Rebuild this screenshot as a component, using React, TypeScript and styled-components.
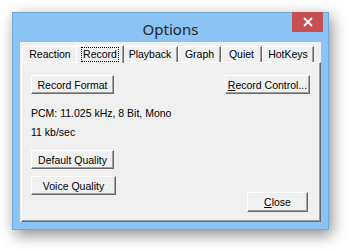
import styled, { createGlobalStyle } from "styled-components";

const GlobalStyle = createGlobalStyle`
  html, body {
    margin: 0;
    padding: 0;
    background: #ffffff;
  }
  body {
    width: 350px;
    height: 251px;
    overflow: hidden;
  }
`;

const tabs = [
  { label: "Reaction", width: 56 },
  { label: "Record", width: 44, active: true },
  { label: "Playback", width: 56 },
  { label: "Graph", width: 43 },
  { label: "Quiet", width: 41 },
  { label: "HotKeys", width: 52 },
];

const App: React.FC = () => {
  return (
    <>
      <GlobalStyle />
      <Page>
        <Window>
          <TitleBar>
            <Title>Options</Title>
            <CloseBox aria-label="Close">
              <svg width="10" height="10" viewBox="0 0 10 10">
                <path d="M1 1 L9 9 M9 1 L1 9" stroke="#fff" strokeWidth="1.8" />
              </svg>
            </CloseBox>
          </TitleBar>
          <Client>
            <TabStrip>
              {tabs.map((tab) => (
                <Tab key={tab.label} $active={tab.active} $width={tab.width}>
                  <TabLabel $active={tab.active}>{tab.label}</TabLabel>
                </Tab>
              ))}
            </TabStrip>
            <Panel>
              <TopRow>
                <Button $width={83}>Record Format</Button>
                <Button $width={85}>
                  <u>R</u>ecord Control...
                </Button>
              </TopRow>
              <InfoLine $top={11}>PCM: 11.025 kHz, 8 Bit, Mono</InfoLine>
              <InfoLine $top={2}>11 kb/sec</InfoLine>
              <BottomRow>
                <QualityColumn>
                  <Button $width={83}>Default Quality</Button>
                  <Button $width={85}>Voice Quality</Button>
                </QualityColumn>
                <CloseButton $width={61}>
                  <u>C</u>lose
                </CloseButton>
              </BottomRow>
            </Panel>
          </Client>
        </Window>
      </Page>
    </>
  );
};

const Page = styled.div`
  padding: 12px 0 0 12px;
`;

const Window = styled.div`
  width: 317px;
  height: 218px;
  box-sizing: border-box;
  background: #8ac3f4;
  border: 1px solid #6fa9de;
  box-shadow: 3px 5px 14px rgba(0, 0, 0, 0.45);
  display: flex;
  flex-direction: column;
`;

const TitleBar = styled.div`
  height: 29px;
  position: relative;
  display: flex;
  align-items: center;
  justify-content: center;
`;

const Title = styled.span`
  font-family: "Noto Sans", "Open Sans", sans-serif;
  font-size: 15px;
  color: #262626;
  margin-top: 2px;
`;

const CloseBox = styled.div`
  position: absolute;
  top: -1px;
  right: 5px;
  width: 31px;
  height: 20px;
  background: #c75050;
  display: flex;
  align-items: center;
  justify-content: center;
`;

const Client = styled.div`
  margin: 0 7px 7px 7px;
  flex: 1;
  background: #f0f0f0;
  display: flex;
  flex-direction: column;
  padding: 3px 0 0 1px;
  font-family: "Liberation Sans", Arial, sans-serif;
  font-size: 10.5px;
  color: #000;
`;

const TabStrip = styled.div`
  display: flex;
  align-items: flex-end;
  height: 17px;
  padding-left: 1px;
  position: relative;
  z-index: 1;
`;

const Tab = styled.div<{ $active?: boolean; $width: number }>`
  box-sizing: border-box;
  flex: none;
  width: ${(p) => p.$width + (p.$active ? 4 : 0)}px;
  height: ${(p) => (p.$active ? 18 : 16)}px;
  margin: 0 ${(p) => (p.$active ? -2 : 0)}px ${(p) => (p.$active ? -1 : 0)}px;
  background: #f0f0f0;
  border-top: 1px solid #ffffff;
  border-left: 1px solid #ffffff;
  border-right: 1px solid #696969;
  box-shadow: inset -1px 0 #a0a0a0;
  display: flex;
  align-items: center;
  justify-content: center;
  position: relative;
  z-index: ${(p) => (p.$active ? 2 : 1)};
`;

const TabLabel = styled.span<{ $active?: boolean }>`
  padding: 0 1px;
  line-height: 13px;
  outline: ${(p) => (p.$active ? "1px dotted #000" : "none")};
`;

const Panel = styled.div`
  flex: 1;
  box-sizing: border-box;
  border-top: 1px solid #ffffff;
  border-left: 1px solid #ffffff;
  border-right: 1px solid #696969;
  border-bottom: 1px solid #696969;
  box-shadow: inset -1px -1px #a0a0a0;
  padding: 12px 10px 0 9px;
  display: flex;
  flex-direction: column;
`;

const TopRow = styled.div`
  display: flex;
  justify-content: space-between;
`;

const Button = styled.div<{ $width: number }>`
  box-sizing: border-box;
  width: ${(p) => p.$width}px;
  height: 19px;
  background: #f0f0f0;
  border-top: 1px solid #ffffff;
  border-left: 1px solid #ffffff;
  border-right: 1px solid #696969;
  border-bottom: 1px solid #696969;
  box-shadow: inset -1px -1px #a0a0a0;
  display: flex;
  align-items: center;
  justify-content: center;
  white-space: nowrap;
  u {
    text-decoration: underline;
  }
`;

const CloseButton = styled(Button)`
  height: 20px;
  margin-top: 42px;
`;

const InfoLine = styled.div<{ $top: number }>`
  margin-top: ${(p) => p.$top}px;
  line-height: 17px;
`;

const BottomRow = styled.div`
  display: flex;
  justify-content: space-between;
  align-items: flex-start;
  margin-top: 9px;
  padding-right: 2px;
`;

const QualityColumn = styled.div`
  display: flex;
  flex-direction: column;
  gap: 7px;
`;

export default App;
